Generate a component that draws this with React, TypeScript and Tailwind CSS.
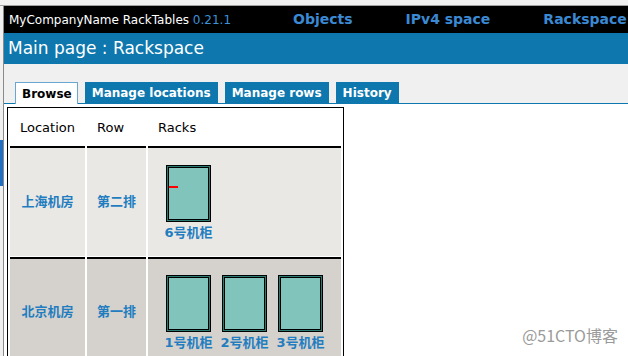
import React from 'react';

const font = { fontFamily: '"DejaVu Sans", "Noto Sans CJK SC", sans-serif' };

function Rack({ label, mark }: { label: string; mark?: boolean }) {
  return (
    <div className="flex flex-col items-center w-[45px]">
      <div className="w-[45px] h-[57px] border border-black bg-[#2b7b75] p-px">
        <div className="relative w-full h-full border border-black bg-[#80c4bb]">
          {mark && <div className="absolute left-0 top-[18px] w-[9px] h-[2px] bg-[#ff0000]" />}
        </div>
      </div>
      <span className="mt-[3px] text-[13px] leading-[16px] font-bold text-[#1f7dc0] whitespace-nowrap">{label}</span>
    </div>
  );
}

export default function App() {
  const tabs = ['Manage locations', 'Manage rows', 'History'];
  const rows = [
    { location: '上海机房', row: '第二排', racks: [{ label: '6号机柜', mark: true }], bg: 'bg-[#eae8e4]' },
    {
      location: '北京机房',
      row: '第一排',
      racks: [{ label: '1号机柜' }, { label: '2号机柜' }, { label: '3号机柜' }],
      bg: 'bg-[#d5d1cc]',
    },
  ];

  return (
    <div className="relative w-[628px] h-[356px] overflow-hidden bg-white flex flex-col" style={font}>
      {/* window chrome strip */}
      <div className="h-[6px] shrink-0 bg-[#f0f0f0] border-b border-[#a0a0a0]" />

      <div className="flex flex-1 min-h-0">
        {/* neighbour window edge */}
        <div className="w-[4px] shrink-0 bg-[#f0f0f0] border-r border-[#8a8a8a] flex flex-col">
          <div className="h-[134px] shrink-0" />
          <div className="h-[46px] shrink-0 bg-[#1f6fc4]" />
        </div>

        <div className="flex-1 min-w-0 flex flex-col">
          {/* top bar */}
          <div className="h-[27px] shrink-0 bg-black flex items-center pl-[5px] whitespace-nowrap">
            <span className="text-[12px] text-white w-[284px]">
              MyCompanyName RackTables <span className="text-[#3d92d8]">0.21.1</span>
            </span>
            <div className="flex gap-[53px] text-[14px] font-bold text-[#3b89d3]">
              <span>Objects</span>
              <span>IPv4 space</span>
              <span>Rackspace</span>
            </div>
          </div>

          {/* page title */}
          <div className="h-[31px] shrink-0 bg-[#0d77ae] flex items-center pl-[4px]">
            <span className="text-[17px] text-white whitespace-nowrap">Main page : Rackspace</span>
          </div>

          {/* tabs */}
          <div className="h-[40px] shrink-0 bg-[#f0f0f0] border-b border-[#0d77ae] flex items-end gap-[7px] pl-[11px]">
            <div className="h-[22px] -mb-px pl-[6px] pr-[5px] bg-white border border-b-0 border-[#6aa6cf] flex items-center text-[12px] font-bold text-black">
              Browse
            </div>
            {tabs.map((t) => (
              <div key={t} className="h-[21px] px-[7px] bg-[#0d77ae] flex items-center text-[12px] font-bold text-white whitespace-nowrap">
                {t}
              </div>
            ))}
          </div>

          {/* content */}
          <div className="flex-1 min-h-0 overflow-hidden pl-[3px] pt-[3px]">
            <div className="w-[337px] border border-black p-[2px] pb-0 h-[300px]">
              <div className="grid grid-cols-[75px_59px_193px] gap-x-[2px] text-[13px]">
                <div className="h-[38px] border-b-2 border-black pl-[10px] flex items-center">Location</div>
                <div className="h-[38px] border-b-2 border-black pl-[10px] flex items-center">Row</div>
                <div className="h-[38px] border-b-2 border-black pl-[10px] flex items-center">Racks</div>

                {rows.map((r, i) => (
                  <React.Fragment key={r.location}>
                    <div className={`${r.bg} ${i > 0 ? 'border-t-2 border-black mt-px' : ''} h-[108px] flex items-center justify-center font-bold text-[#1f7dc0]`}>
                      {r.location}
                    </div>
                    <div className={`${r.bg} ${i > 0 ? 'border-t-2 border-black mt-px' : ''} h-[108px] flex items-center justify-center font-bold text-[#1f7dc0]`}>
                      {r.row}
                    </div>
                    <div className={`${r.bg} ${i > 0 ? 'border-t-2 border-black mt-px pt-[16px]' : 'pt-[17px]'} h-[108px] flex gap-[11px] pl-[18px]`}>
                      {r.racks.map((k) => (
                        <Rack key={k.label} label={k.label} mark={'mark' in k && k.mark} />
                      ))}
                    </div>
                  </React.Fragment>
                ))}
              </div>
            </div>
          </div>
        </div>
      </div>

      {/* watermark */}
      <div
        className="absolute right-[10px] bottom-[9px] text-[16px] text-[#9a9a9a]"
        style={{ fontFamily: '"Noto Sans CJK SC", sans-serif', textShadow: '0 0 1px #fff' }}
      >
        @51CTO博客
      </div>
    </div>
  );
}
